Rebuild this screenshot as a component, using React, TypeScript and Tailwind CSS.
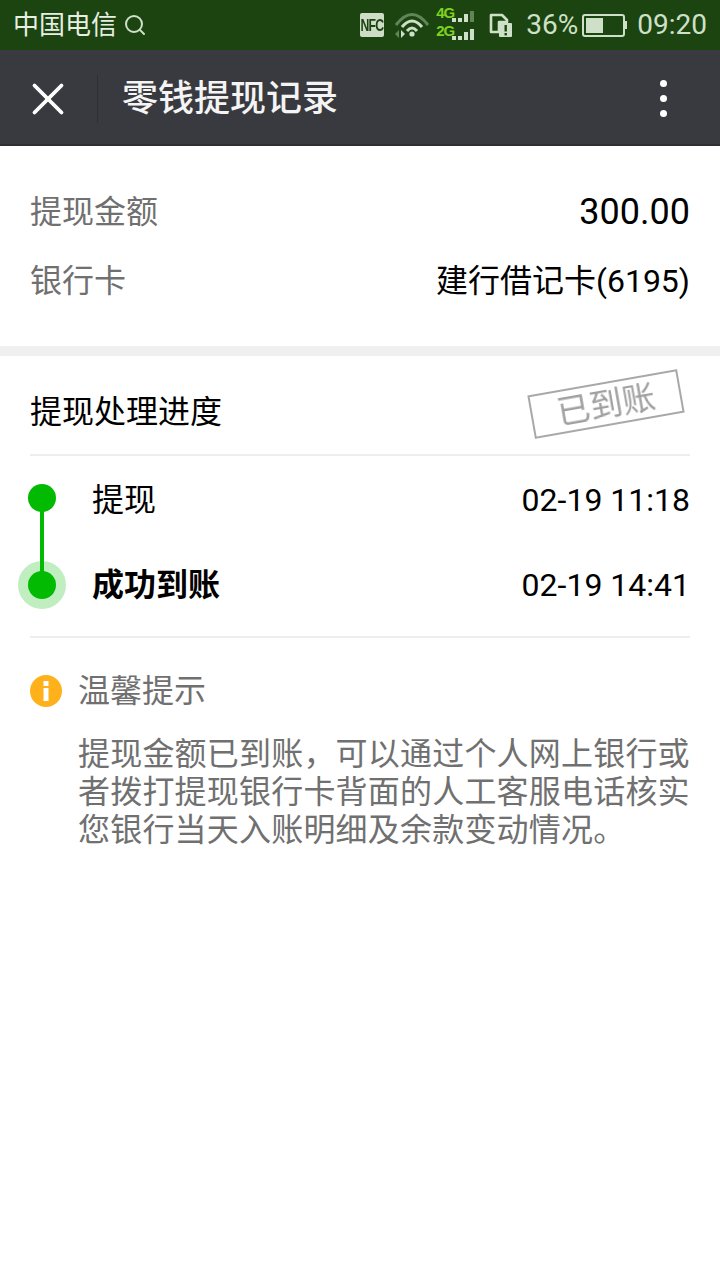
import React from 'react';
import { X, Search } from 'lucide-react';

const cjk = "font-['Roboto','Noto_Sans_CJK_SC',sans-serif]";

const Bars: React.FC<{ lastDim?: boolean }> = ({ lastDim }) => (
  <div className="flex items-end gap-[2px] ml-[1px] self-end">
    <div className="w-[4px] h-[4px] bg-[#cfe0c8]" />
    <div className="w-[4px] h-[4px] bg-[#cfe0c8]" />
    <div className="w-[4px] h-[8px] bg-[#cfe0c8]" />
    <div className={`w-[4px] h-[11px] ${lastDim ? 'bg-[#5f8558]' : 'bg-[#cfe0c8]'}`} />
  </div>
);

const StatusIcons: React.FC = () => (
  <div className="flex items-center text-[#cfe0c8]">
    {/* nfc */}
    <div className="w-6 h-6 bg-[#cfdcc8] rounded-[2px] flex items-center justify-center overflow-hidden">
      <span className="text-[#1c4410] text-[17px] leading-none font-bold font-['Liberation_Sans',sans-serif] tracking-[-1px] scale-x-[0.72]">NFC</span>
    </div>
    {/* wifi */}
    <svg width="36" height="26" viewBox="0 0 36 26" className="ml-[10px]" fill="none">
      <path d="M2 13 Q18 -8 34 13" stroke="#5f8558" strokeWidth="3" />
      <path d="M8 15 Q18 3 28 15" stroke="#cfe0c8" strokeWidth="3" />
      <path d="M13 19 Q18 13 23 19" stroke="#cfe0c8" strokeWidth="3" />
      <circle cx="18" cy="22" r="2.6" fill="#cfe0c8" />
      <path d="M5 18 L1 22 L5 26 Z" fill="#5f8558" />
      <path d="M7 18 L11 22 L7 26 Z" fill="#cfe0c8" />
    </svg>
    {/* signal */}
    <div className="ml-[6px] flex flex-col gap-[3px] w-[40px] mb-[3px]">
      <div className="flex h-[15px]">
        <span className="text-[15px] leading-[12px] font-bold text-[#7ed321] font-['Liberation_Sans',sans-serif] w-[15px] tracking-[-1px]">4G</span>
        <Bars lastDim />
      </div>
      <div className="flex h-[15px]">
        <span className="text-[15px] leading-[12px] font-bold text-[#7ed321] font-['Liberation_Sans',sans-serif] w-[15px] tracking-[-1px]">2G</span>
        <Bars />
      </div>
    </div>
    {/* sim alert */}
    <svg width="24" height="26" viewBox="0 0 24 26" className="ml-[13px]" fill="none">
      <path d="M2 3 H13 L18 8 V10 H10 V20 H2 Z" stroke="#cfe0c8" strokeWidth="2.6" strokeLinejoin="round" />
      <rect x="10" y="11" width="13" height="14" rx="1" fill="#cfe0c8" />
      <rect x="15.5" y="13" width="2.4" height="6.5" fill="#1c4410" />
      <rect x="15.5" y="21" width="2.4" height="2.4" fill="#1c4410" />
    </svg>
    <span className="ml-[13px] text-[28px] leading-none font-['Roboto',sans-serif]">36%</span>
    {/* battery */}
    <div className="ml-[4px] flex items-center">
      <div className="w-[43px] h-[23px] border-2 border-[#cfe0c8] rounded-[3px] p-[2px]">
        <div className="w-[17px] h-full bg-[#cfe0c8]" />
      </div>
      <div className="w-[2px] h-[8px] bg-[#cfe0c8]" />
    </div>
    <span className="ml-[10px] text-[28px] leading-none font-['Roboto',sans-serif]">09:20</span>
  </div>
);

const InfoRow: React.FC<{ label: string; value: React.ReactNode; className?: string }> = ({ label, value, className }) => (
  <div className={`flex items-center justify-between h-[70px] ${className ?? ''}`}>
    <span className="text-[32px] text-[#707070]">{label}</span>
    <span className="text-[32px] text-black">{value}</span>
  </div>
);

export default function App() {
  return (
    <div className={`w-[720px] h-[1280px] bg-white overflow-hidden ${cjk}`}>
      <div className="h-[50px] bg-[#1c4410] flex items-center justify-between pl-[13px] pr-[13px]">
        <div className="flex items-center text-[#e6efe2]">
          <span className="text-[26px] leading-none">中国电信</span>
          <Search className="w-[24px] h-[24px] ml-[6px] text-[#cfe0c8]" strokeWidth={2} />
        </div>
        <StatusIcons />
      </div>

      <div className="h-[96px] bg-[#393a3f] border-b-2 border-[#2e2f33] flex items-center pl-[21px] pr-[53px] pt-[3px]">
        <X className="w-[54px] h-[54px] text-white" strokeWidth={1.7} />
        <div className="w-px h-[48px] bg-[#2e2f33] ml-[22px]" />
        <span className="ml-[24px] text-[36px] leading-none text-[#f4f4f4] font-medium">零钱提现记录</span>
        <div className="ml-auto flex flex-col gap-[8px]">
          <div className="w-[7px] h-[7px] bg-white rounded-full" />
          <div className="w-[7px] h-[7px] bg-white rounded-full" />
          <div className="w-[7px] h-[7px] bg-white rounded-full" />
        </div>
      </div>

      <div className="px-[30px] pt-[31px] h-[200px]">
        <InfoRow label="提现金额" value={<span className="text-[36px]">300.00</span>} />
        <InfoRow label="银行卡" value="建行借记卡(6195)" className="-mt-px" />
      </div>

      <div className="h-[10px] bg-[#f0f0f0]" />

      <div className="px-[30px]">
        <div className="relative h-[100px] border-b-2 border-[#eee] flex items-center pt-[14px]">
          <span className="text-[32px] text-black">提现处理进度</span>
          <div className="absolute left-[500px] top-[26px] w-[152px] h-[44px] border-2 border-[#a8a8a8] -rotate-[10deg] flex items-center justify-center blur-[0.4px]">
            <span className="text-[33px] leading-none text-[#a0a0a0]">已到账</span>
          </div>
        </div>

        <div className="relative h-[182px] border-b-2 border-[#eee]">
          <div className="absolute left-[10px] top-[42px] w-[4px] h-[86px] bg-[#02ba02]" />
          <div className="absolute left-[-2px] top-[28px] w-[28px] h-[28px] rounded-full bg-[#02ba02]" />
          <div className="absolute left-[-12px] top-[105px] w-[48px] h-[48px] rounded-full bg-[#02ba02]/25 flex items-center justify-center">
            <div className="w-[28px] h-[28px] rounded-full bg-[#02ba02]" />
          </div>
          <div className="flex items-center justify-between h-[86px] pl-[62px] pt-[1px]">
            <span className="text-[32px] text-black">提现</span>
            <span className="text-[32px] text-black">02-19 11:18</span>
          </div>
          <div className="flex items-center justify-between h-[86px] pl-[62px]">
            <span className="text-[32px] font-bold text-black">成功到账</span>
            <span className="text-[32px] text-black">02-19 14:41</span>
          </div>
        </div>

        <div className="flex items-center h-[36px] mt-[35px]">
          <div className="w-[32px] h-[32px] rounded-full bg-[#ffb11b] flex items-center justify-center">
            <svg width="8" height="20" viewBox="0 0 8 20">
              <rect x="1.5" y="0" width="5" height="5" fill="#fff" />
              <rect x="1.5" y="7" width="5" height="13" fill="#fff" />
            </svg>
          </div>
          <span className="ml-[16px] text-[32px] text-[#707070]">温馨提示</span>
        </div>

        <p className="mt-[26px] ml-[48px] text-[32px] leading-[38px] text-[#707070] tracking-[0.2px]">
          提现金额已到账，可以通过个人网上银行或者拨打提现银行卡背面的人工客服电话核实您银行当天入账明细及余款变动情况。
        </p>
      </div>
    </div>
  );
}
